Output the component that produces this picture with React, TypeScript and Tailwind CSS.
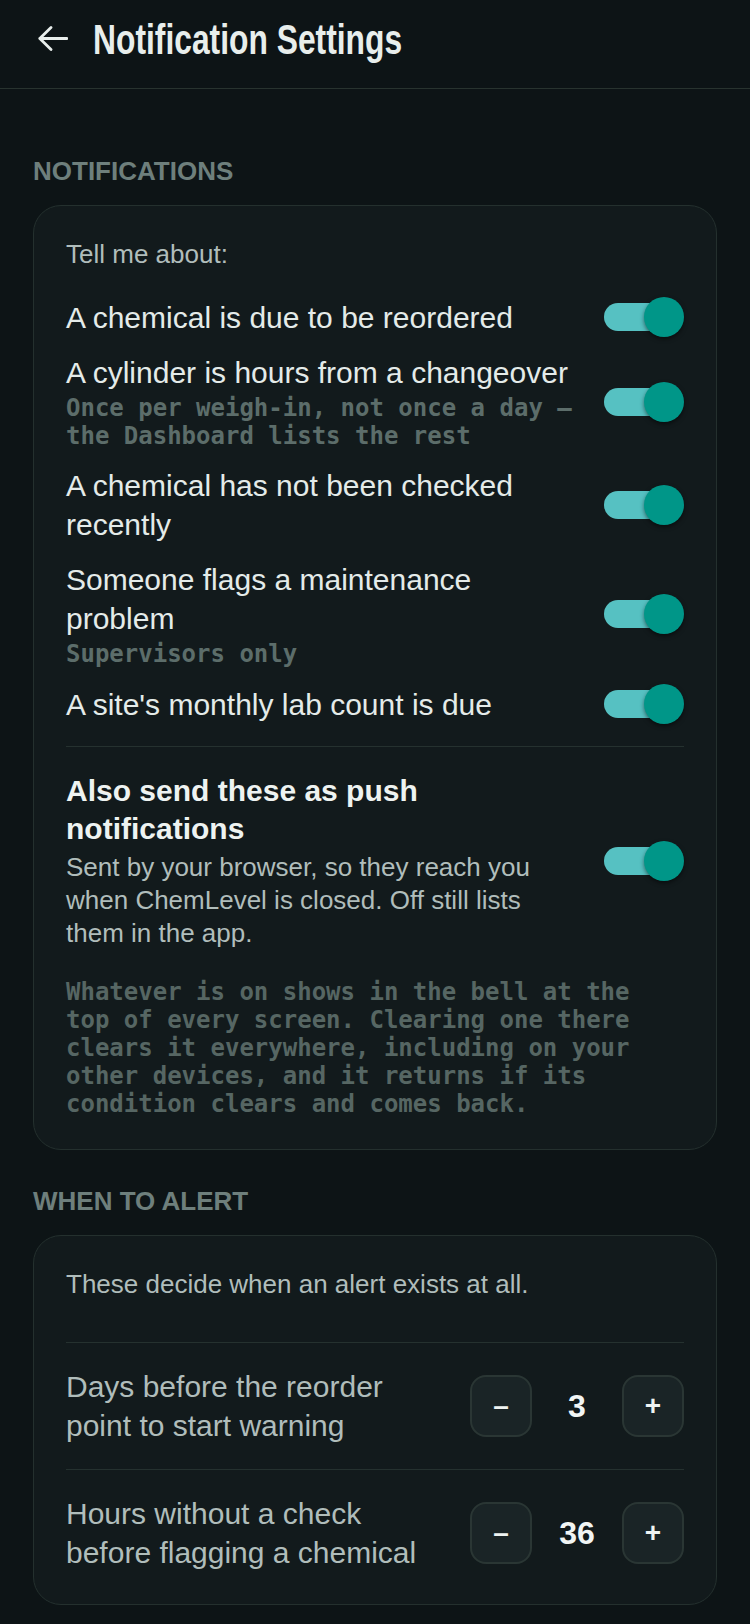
import React from "react";

function Toggle() {
  return (
    <div className="relative w-[80px] h-[40px] shrink-0">
      <div className="absolute left-0 top-[6px] w-[70px] h-[28px] rounded-full bg-[#56c1c2]" />
      <div className="absolute right-0 top-0 w-[40px] h-[40px] rounded-full bg-[#009688] shadow-[0_2px_4px_rgba(0,0,0,0.5)]" />
    </div>
  );
}

function Row({ title, sub }: { title: string; sub?: string }) {
  return (
    <div className="flex items-center justify-between gap-[24px]">
      <div className="min-w-0 flex-1">
        <div className="text-[30px] leading-[39px] text-[#e4ebe9]">{title}</div>
        {sub && (
          <div className="mt-[2px] font-['DejaVu_Sans_Mono',monospace] font-bold text-[24px] leading-[28px] text-[#5c6d6a]">
            {sub}
          </div>
        )}
      </div>
      <Toggle />
    </div>
  );
}

function Stepper({ label, value }: { label: string; value: string }) {
  return (
    <div className="flex items-center justify-between gap-[24px] py-[24px] border-t border-[#25312f]">
      <div className="min-w-0 flex-1 text-[30px] leading-[39px] text-[#b0bdbb]">{label}</div>
      <div className="flex items-center gap-[16px] shrink-0">
        <div className="w-[62px] h-[62px] rounded-[16px] border-2 border-[#2a3634] bg-[#1a2426] flex items-center justify-center text-[28px] font-bold text-[#eef3f1] leading-none">
          –
        </div>
        <div className="w-[58px] text-center text-[32px] font-bold text-[#f1f5f4] leading-none">{value}</div>
        <div className="w-[62px] h-[62px] rounded-[16px] border-2 border-[#2a3634] bg-[#1a2426] flex items-center justify-center text-[28px] font-bold text-[#eef3f1] leading-none">
          +
        </div>
      </div>
    </div>
  );
}

export default function App() {
  return (
    <div className="min-h-screen w-full bg-[#0d1416] font-['Liberation_Sans',Arial,sans-serif]">
      <header className="h-[89px] border-b border-[#28332f] flex items-center pl-[38px] pb-[8px]">
        <svg width="30" height="25" viewBox="0 0 30 25" fill="none" className="shrink-0 -mt-[3px]">
          <path d="M13 1.5 L1.8 12.5 L13 23.5 M1.8 12.5 H29" stroke="#e8eeec" strokeWidth="2.8" strokeLinecap="round" strokeLinejoin="round" />
        </svg>
        <h1 className="ml-[25px] whitespace-nowrap origin-left scale-x-[0.757] font-['Liberation_Sans',Arial,sans-serif] font-bold text-[42px] leading-none text-[#e8eeec]">
          Notification Settings
        </h1>
      </header>

      <main className="px-[33px] pt-[66px]">
        <div className="text-[26px] leading-[32px] font-bold text-[#6e7f7c] mb-[18px]">NOTIFICATIONS</div>
        <section className="rounded-[28px] border border-[#24302e] bg-[#121a1c] px-[32px] pt-[32px] pb-[31px]">
          <div className="text-[26px] leading-[33px] text-[#b0bdbb] mb-[26px]">Tell me about:</div>
          <div className="flex flex-col gap-[16px]">
            <Row title="A chemical is due to be reordered" />
            <Row title="A cylinder is hours from a changeover" sub="Once per weigh-in, not once a day — the Dashboard lists the rest" />
            <Row title="A chemical has not been checked recently" />
            <Row title="Someone flags a maintenance problem" sub="Supervisors only" />
            <Row title="A site's monthly lab count is due" />
          </div>
          <div className="mt-[22px] border-t border-[#25312f]" />
          <div className="mt-[25px] flex items-center justify-between gap-[24px]">
            <div className="min-w-0 flex-1">
              <div className="text-[30px] leading-[38px] font-bold text-[#eef3f1]">Also send these as push notifications</div>
              <div className="mt-[3px] text-[26px] leading-[33px] text-[#b0bdbb]">
                Sent by your browser, so they reach you when ChemLevel is closed. Off still lists them in the app.
              </div>
            </div>
            <Toggle />
          </div>
          <div className="mt-[28px] font-['DejaVu_Sans_Mono',monospace] font-bold text-[24px] leading-[28px] text-[#566663]">
            Whatever is on shows in the bell at the top of every screen. Clearing one there clears it everywhere, including on your other devices, and it returns if its condition clears and comes back.
          </div>
        </section>

        <div className="mt-[35px] text-[26px] leading-[32px] font-bold text-[#6e7f7c] mb-[18px]">WHEN TO ALERT</div>
        <section className="rounded-[28px] border border-[#24302e] bg-[#121a1c] px-[32px] pt-[32px] pb-[8px]">
          <div className="text-[26px] leading-[33px] text-[#b0bdbb] mb-[41px]">These decide when an alert exists at all.</div>
          <Stepper label="Days before the reorder point to start warning" value="3" />
          <Stepper label="Hours without a check before flagging a chemical" value="36" />
        </section>
      </main>
    </div>
  );
}
